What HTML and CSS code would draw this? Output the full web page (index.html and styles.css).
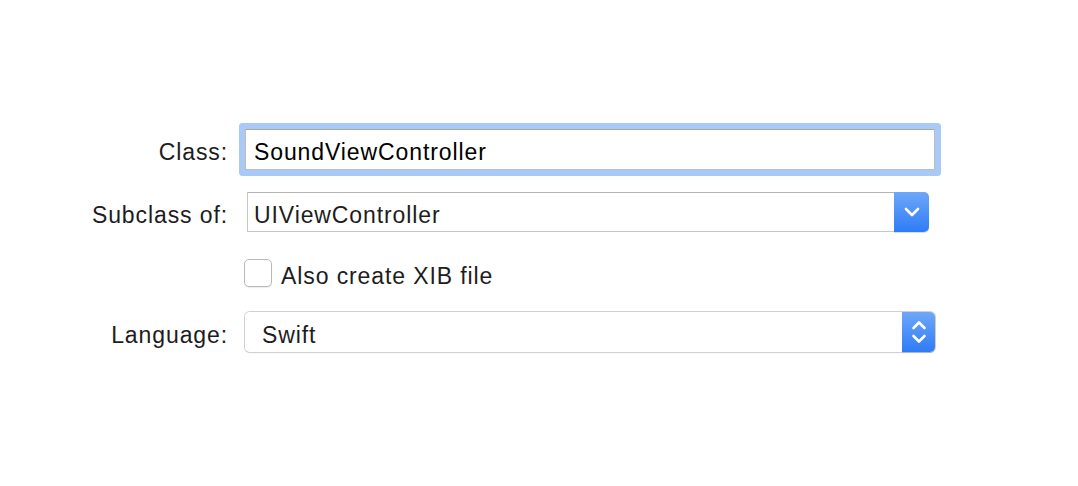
FILE: index.html
```html
<!DOCTYPE html>
<html>
<head>
<meta charset="utf-8">
<link rel="stylesheet" href="styles.css">
</head>
<body>
<div class="form">
  <div class="row row-class">
    <div class="label">Class:</div>
    <div class="ring"><div class="field"><span class="txt">SoundViewController</span></div></div>
  </div>
  <div class="row row-sub">
    <div class="label">Subclass of:</div>
    <div class="combo">
      <div class="combo-text"><span class="txt">UIViewController</span></div>
      <div class="btn btn-combo">
        <svg width="18" height="12" viewBox="0 0 18 12"><path d="M3 3 L9 9 L15 3" fill="none" stroke="#fff" stroke-width="2.6" stroke-linecap="round" stroke-linejoin="round"/></svg>
      </div>
    </div>
  </div>
  <div class="row row-check">
    <div class="label"></div>
    <label class="check"><span class="box"></span><span class="check-text txt">Also create XIB file</span></label>
  </div>
  <div class="row row-lang">
    <div class="label">Language:</div>
    <div class="popup">
      <div class="popup-text"><span class="txt">Swift</span></div>
      <div class="btn btn-popup">
        <svg width="16" height="30" viewBox="0 0 16 30"><path d="M2.5 11 L8 5.5 L13.5 11 M2.5 19 L8 24.5 L13.5 19" fill="none" stroke="#fff" stroke-width="2.6" stroke-linecap="round" stroke-linejoin="round"/></svg>
      </div>
    </div>
  </div>
</div>
</body>
</html>
```
FILE: styles.css
```css
html, body {
  margin: 0;
  padding: 0;
  background: #ffffff;
}
body {
  font-family: "Liberation Sans", Arial, sans-serif;
  font-size: 23px;
  letter-spacing: 0.9px;
  color: #1d1d1d;
  width: 1078px;
  height: 486px;
  overflow: hidden;
}
.form {
  display: flex;
  flex-direction: column;
  padding-top: 129px;
}
.row {
  display: flex;
  align-items: center;
}
.label {
  width: 228px;
  text-align: right;
  flex: none;
  margin-right: 17px;
  padding-top: 6px;
}
.txt {
  padding-top: 6px;
}
.row-class { height: 41px; }
.row-sub { height: 40px; margin-top: 22px; }
.row-check { height: 28px; margin-top: 27px; }
.row-lang { height: 40px; margin-top: 25px; }

.ring {
  width: 690px;
  height: 41px;
  box-sizing: border-box;
  box-shadow: 0 0 0 6px #a9c9f6;
  border-radius: 1px;
}
.field {
  box-sizing: border-box;
  height: 41px;
  border: 1px solid #bdbdbd;
  border-top-color: #a8a8a8;
  background: #fff;
  color: #000;
  padding-left: 8px;
  display: flex;
  align-items: center;
}
.combo {
  display: flex;
  width: 682px;
  height: 40px;
  margin-left: 2px;
}
.combo-text {
  flex: 1;
  box-sizing: border-box;
  border: 1px solid #c6c6c6;
  border-right: none;
  border-top-color: #b4b4b4;
  padding-left: 6px;
  display: flex;
  align-items: center;
  color: #1d1d1d;
}
.btn {
  flex: none;
  display: flex;
  align-items: center;
  justify-content: center;
  background: linear-gradient(#6ea7f8, #2e7cf6);
  border-radius: 0 5px 5px 0;
  box-shadow: 0 1px 1px rgba(0,0,0,0.15);
}
.btn-combo {
  width: 35px;
  height: 40px;
}
.popup {
  display: flex;
  width: 690px;
  height: 40px;
  box-sizing: border-box;
  border-radius: 5px;
  box-shadow: 0 0 0 1px #d0d0d0, 0 1px 1px rgba(0,0,0,0.18);
}
.popup-text {
  flex: 1;
  padding-left: 17px;
  display: flex;
  align-items: center;
  background: #fff;
  border-radius: 5px 0 0 5px;
  color: #1d1d1d;
}
.btn-popup {
  width: 33px;
  height: 40px;
}
.check {
  display: flex;
  align-items: center;
  margin-left: -1px;
}
.box {
  width: 28px;
  height: 28px;
  box-sizing: border-box;
  border: 1px solid #b9b9b9;
  border-radius: 5px;
  background: #fff;
  box-shadow: 0 1px 1px rgba(0,0,0,0.08);
  margin-right: 9px;
}
.check-text {
  color: #1d1d1d;
}
```
